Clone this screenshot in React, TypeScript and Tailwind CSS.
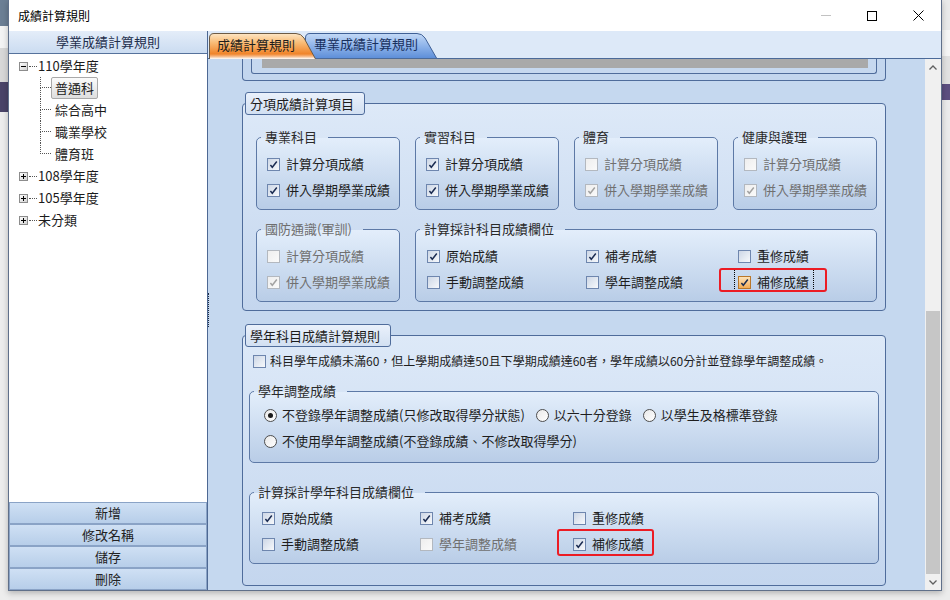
import React from "react";

type CbProps = { checked?: boolean; disabled?: boolean; hot?: boolean };

function Box({ checked, disabled, hot }: CbProps) {
  const cls = hot
    ? "border-[#b9772a] bg-linear-to-b from-[#fde3b8] to-[#f4ac52]"
    : disabled
    ? "border-[#b3b8bf] bg-linear-to-br from-[#eeeeee] to-[#fafafa]"
    : "border-[#6e86ae] bg-linear-to-br from-[#cdd7e6] to-[#f7f9fc]";
  return (
    <span className={`w-[13px] h-[13px] shrink-0 border ${cls} flex items-center justify-center`}>
      {checked && (
        <svg width="11" height="11" viewBox="0 0 11 11">
          <path
            d="M2.4 5.9 L4.3 8.2 L8.8 2.5"
            fill="none"
            stroke={disabled ? "#a2a2a2" : "#1b2c52"}
            strokeWidth="1.5"
          />
        </svg>
      )}
    </span>
  );
}

function Cb({
  label,
  checked,
  disabled,
  hot,
  children,
}: CbProps & { label: string; children?: React.ReactNode }) {
  return (
    <div className="relative flex items-center gap-[6px] h-[26px]">
      <Box checked={checked} disabled={disabled} hot={hot} />
      <span
        className={`text-[13px] leading-[18px] whitespace-nowrap ${
          disabled ? "text-[#707070]" : "text-[#1e1e1e]"
        }`}
      >
        {label}
      </span>
      {children}
    </div>
  );
}

function Radio({ label, checked }: { label: string; checked?: boolean }) {
  return (
    <div className="flex items-center gap-[5px] h-[26px]">
      <span className="w-[13px] h-[13px] rounded-full border border-[#4e4e4e] bg-linear-to-br from-[#e9e9e9] to-white flex items-center justify-center">
        {checked && <span className="w-[5px] h-[5px] rounded-full bg-[#1a1a1a]" />}
      </span>
      <span className="text-[13px] leading-[18px] whitespace-nowrap text-[#1e1e1e]">{label}</span>
    </div>
  );
}

function Sub({
  title,
  gray,
  className,
  children,
}: {
  title: string;
  gray?: boolean;
  className?: string;
  children: React.ReactNode;
}) {
  return (
    <fieldset
      className={`border border-[#5d79a6] rounded-[5px] bg-linear-to-b from-[#e3eefb] to-[#b9cde7] ${className ?? ""}`}
    >
      <legend
        className={`ml-[4px] pl-[4px] pr-[11px] text-[13px] leading-[18px] ${
          gray ? "text-[#6e6e6e]" : "text-[#2a2a2a]"
        }`}
      >
        {title}
      </legend>
      {children}
    </fieldset>
  );
}

function Group({
  title,
  children,
}: {
  title: string;
  children: React.ReactNode;
}) {
  return (
    <div className="flex flex-col w-[644px]">
      <div className="relative z-10 self-start ml-[3px] h-[23px] px-[4px] pr-[10px] rounded-[3px] border border-[#4f6c9b] bg-linear-to-b from-[#eaf1fb] to-[#d2e0f2] text-[13px] leading-[21px] text-[#1c1c1c] whitespace-nowrap">
        {title}
      </div>
      <div className="-mt-[12px] border border-[#4f6c9b] rounded-[4px] bg-linear-to-b from-[#dde9f8] to-[#c4d6ee]">
        {children}
      </div>
    </div>
  );
}

function Expander({ open }: { open?: boolean }) {
  return (
    <svg width="9" height="9" viewBox="0 0 9 9" className="shrink-0">
      <defs>
        <linearGradient id={open ? "exo" : "exc"} x1="0" y1="0" x2="1" y2="1">
          <stop offset="0" stopColor="#ffffff" />
          <stop offset="1" stopColor="#d0d0d0" />
        </linearGradient>
      </defs>
      <rect x="0.5" y="0.5" width="8" height="8" fill={`url(#${open ? "exo" : "exc"})`} stroke="#8c8c8c" />
      <line x1="2" y1="4.5" x2="7" y2="4.5" stroke="#000" />
      {!open && <line x1="4.5" y1="2" x2="4.5" y2="7" stroke="#000" />}
    </svg>
  );
}

function YearRow({ label, open }: { label: string; open?: boolean }) {
  return (
    <div className="flex items-center h-[22px] pl-[10px]">
      <Expander open={open} />
      <span className="w-[8px] border-t border-dotted border-[#555] ml-px mr-[1px]" />
      <span className="text-[13px] leading-[18px] text-[#1b1b1b]">{label}</span>
    </div>
  );
}

function ChildRow({ label, last, selected }: { label: string; last?: boolean; selected?: boolean }) {
  return (
    <div className="flex h-[22px]">
      <div className="w-[11px] flex flex-col">
        <div className="h-[11px] border-l border-b border-dotted border-[#555]" />
        <div className={`flex-1 ${last ? "" : "border-l border-dotted border-[#555]"}`} />
      </div>
      <div className="flex items-center">
        <span
          className={`px-[3px] h-[22px] flex items-center border rounded-[2px] text-[13px] leading-[18px] text-[#1b1b1b] ${
            selected ? "border-[#a9a9a9] bg-linear-to-b from-[#fbfbfb] to-[#dedede]" : "border-transparent"
          }`}
        >
          {label}
        </span>
      </div>
    </div>
  );
}

function SideButton({ label }: { label: string }) {
  return (
    <div className="h-[22px] flex items-center justify-center border border-[#8aa3c6] bg-linear-to-b from-[#cfe0f4] to-[#b7cee9] text-[13px] leading-[18px] text-[#222]">
      {label}
    </div>
  );
}

export default function App() {
  return (
    <div className="relative w-[950px] h-[600px] overflow-hidden bg-[#ececec] font-['Noto_Sans_CJK_TC','Noto_Sans',sans-serif] text-[#1e1e1e]">
      {/* desktop fragments */}
      <div className="absolute left-0 top-0 w-[8px] h-[600px] flex flex-col">
        <div className="h-[26px] bg-[#6c7f95]" />
        <div className="h-[22px] bg-[#f4f4f4]" />
        <div className="h-[34px] bg-[#d8d8d8]" />
        <div className="h-[30px] bg-[#4a4468]" />
        <div className="flex-1 bg-[#ededed]" />
      </div>
      <div className="absolute right-0 top-0 w-[8px] h-[600px] flex flex-col">
        <div className="h-[30px] bg-[#eaeaea]" />
        <div className="h-[26px] bg-[#f6f6f6]" />
        <div className="h-[28px] bg-[#e2e2e2]" />
        <div className="h-[16px] bg-[#5c4f80]" />
        <div className="flex-1 bg-[#ececec]" />
      </div>

      {/* window */}
      <div className="absolute left-[8px] top-0 w-[934px] h-[591px] flex flex-col bg-white border-x border-b border-[#60708a] shadow-[0_2px_6px_rgba(0,0,0,0.25)]">
        {/* title bar */}
        <div className="h-[31px] flex items-center shrink-0 bg-white">
          <span className="pl-[9px] text-[12px] leading-[16px] text-black">成績計算規則</span>
          <div className="ml-auto flex h-full">
            <div className="w-[46px] flex items-center justify-center">
              <span className="w-[10px] h-px bg-[#c2c2c2]" />
            </div>
            <div className="w-[46px] flex items-center justify-center">
              <span className="w-[10px] h-[10px] border border-black" />
            </div>
            <div className="w-[46px] flex items-center justify-center">
              <svg width="11" height="11" viewBox="0 0 11 11">
                <path d="M0.5 0.5 L10.5 10.5 M10.5 0.5 L0.5 10.5" stroke="#000" strokeWidth="1" />
              </svg>
            </div>
          </div>
        </div>

        {/* body */}
        <div className="flex flex-1 min-h-0">
          {/* left panel */}
          <div className="w-[198px] flex flex-col shrink-0 bg-white">
            <div className="h-[23px] shrink-0 flex items-center justify-center border-b border-[#56729c] bg-linear-to-b from-[#e4edf9] to-[#cbdcf1] text-[13px] leading-[18px] text-[#1f2f4d]">
              學業成績計算規則
            </div>
            <div className="flex-1 pt-px bg-white">
              <YearRow label="110學年度" open />
              <div className="pl-[31px]">
                <ChildRow label="普通科" selected />
                <ChildRow label="綜合高中" />
                <ChildRow label="職業學校" />
                <ChildRow label="體育班" last />
              </div>
              <YearRow label="108學年度" />
              <YearRow label="105學年度" />
              <YearRow label="未分類" />
            </div>
            <div className="shrink-0 flex flex-col">
              <SideButton label="新增" />
              <SideButton label="修改名稱" />
              <SideButton label="儲存" />
              <SideButton label="刪除" />
            </div>
          </div>

          {/* splitter */}
          <div className="w-px shrink-0 bg-[#4d6893]" />

          {/* right panel */}
          <div className="flex-1 min-w-0 flex flex-col">
            {/* tabs */}
            <div className="h-[28px] shrink-0 flex items-end pl-px border-b border-[#4b6a99] bg-[#dde9f8]">
              <div className="relative z-10 w-[107px] h-[26px] -mb-px">
                <svg width="107" height="26" viewBox="0 0 107 26" className="absolute inset-0">
                  <defs>
                    <linearGradient id="tabA" x1="0" y1="0" x2="0" y2="1">
                      <stop offset="0" stopColor="#fde6c6" />
                      <stop offset="0.35" stopColor="#f9bd78" />
                      <stop offset="0.8" stopColor="#f0842a" />
                      <stop offset="0.9" stopColor="#f6b987" />
                      <stop offset="1" stopColor="#ffffff" />
                    </linearGradient>
                  </defs>
                  <path
                    d="M0.5 26 L0.5 5 Q0.5 0.5 5 0.5 L87 0.5 Q92 0.5 95 5 L106.5 26"
                    fill="url(#tabA)"
                    stroke="#6d5b45"
                  />
                </svg>
                <span className="absolute left-[8px] top-[3px] text-[13px] leading-[18px] text-[#1c1c1c]">成績計算規則</span>
              </div>
              <div className="relative -ml-[11px] w-[132px] h-[25px]">
                <svg width="132" height="25" viewBox="0 0 132 25" className="absolute inset-0">
                  <defs>
                    <linearGradient id="tabB" x1="0" y1="0" x2="0" y2="1">
                      <stop offset="0" stopColor="#c3d9f6" />
                      <stop offset="0.5" stopColor="#8fb4ea" />
                      <stop offset="1" stopColor="#5e8fd9" />
                    </linearGradient>
                  </defs>
                  <path
                    d="M0.5 25 L0.5 5 Q0.5 0.5 5 0.5 L112 0.5 Q117 0.5 120 5 L131.5 25"
                    fill="url(#tabB)"
                    stroke="#3f6096"
                  />
                </svg>
                <span className="absolute left-[9px] top-[2px] text-[13px] leading-[18px] text-[#18305e]">畢業成績計算規則</span>
              </div>
            </div>

            {/* content + scrollbar */}
            <div className="flex flex-1 min-h-0">
              <div className="flex-1 min-w-0 overflow-hidden bg-[#c5d8ef] pl-[34px] flex flex-col relative">
                <div className="absolute left-0 top-[234px] h-[34px] border-l border-dotted border-[#1d2b44]" />
                {/* partial top box */}
                <div className="w-[644px] h-[22px] shrink-0 border-x border-b border-[#4f6c9b] rounded-b-[4px] bg-[#c3d6ee] px-[8px]">
                  <div className="h-[15px] border-x border-b border-[#4f6c9b] rounded-b-[3px] bg-[#c6d8ef] pl-[10px] pr-[8px]">
                    <div className="h-[9px] bg-[#a9a9a9]" />
                  </div>
                </div>

                <div className="mt-[11px] shrink-0">
                  <Group title="分項成績計算項目">
                    <div className="pt-[24px] pb-[8px] pl-[13px] flex flex-col gap-[10px]">
                      <div className="flex gap-[15px]">
                        {[
                          { t: "專業科目", d: false, a: true },
                          { t: "實習科目", d: false, a: true },
                          { t: "體育", d: true, a: false },
                          { t: "健康與護理", d: true, a: false },
                        ].map((g) => (
                          <Sub key={g.t} title={g.t} className="w-[144px]">
                            <div className="pt-[5px] pb-[6px] pl-[10px] flex flex-col">
                              <Cb label="計算分項成績" checked={g.a} disabled={g.d} />
                              <Cb label="併入學期學業成績" checked disabled={g.d} />
                            </div>
                          </Sub>
                        ))}
                      </div>
                      <div className="flex gap-[15px]">
                        <Sub title="國防通識(軍訓)" gray className="w-[144px]">
                          <div className="pt-[5px] pb-[6px] pl-[10px] flex flex-col">
                            <Cb label="計算分項成績" disabled />
                            <Cb label="併入學期學業成績" checked disabled />
                          </div>
                        </Sub>
                        <Sub title="計算採計科目成績欄位" className="w-[462px]">
                          <div className="pt-[5px] pb-[6px] pl-[11px] grid grid-cols-[159px_152px_1fr]">
                            <Cb label="原始成績" checked />
                            <Cb label="補考成績" checked />
                            <Cb label="重修成績" />
                            <Cb label="手動調整成績" />
                            <Cb label="學年調整成績" />
                            <Cb label="補修成績" checked hot>
                              <span className="absolute left-[-4px] top-px w-[80px] h-[21px] border-x border-dotted border-black" />
                              <span className="absolute left-[-19px] top-[-1px] w-[108px] h-[24px] border-2 border-[#ec1c24] rounded-[3px]" />
                            </Cb>
                          </div>
                        </Sub>
                      </div>
                    </div>
                  </Group>
                </div>

                <div className="mt-[13px] shrink-0">
                  <Group title="學年科目成績計算規則">
                    <div className="pt-[14px] pb-[21px] px-[6px] flex flex-col">
                      <div className="h-[22px] pl-[4px] flex items-center gap-[4px]">
                        <Box />
                        <span className="text-[12px] leading-[16px] whitespace-nowrap text-[#1e1e1e]">
                          科目學年成績未滿60，但上學期成績達50且下學期成績達60者，學年成績以60分計並登錄學年調整成績。
                        </span>
                      </div>
                      <Sub title="學年調整成績" className="mt-[10px]">
                        <div className="pt-[2px] pb-[8px] pl-[14px] flex flex-col">
                          <div className="flex gap-[11px]">
                            <Radio label="不登錄學年調整成績(只修改取得學分狀態)" checked />
                            <Radio label="以六十分登錄" />
                            <Radio label="以學生及格標準登錄" />
                          </div>
                          <Radio label="不使用學年調整成績(不登錄成績、不修改取得學分)" />
                        </div>
                      </Sub>
                      <Sub title="計算採計學年科目成績欄位" className="mt-[20px]">
                        <div className="pt-[4px] pb-[6px] pl-[12px] grid grid-cols-[158px_153px_1fr]">
                          <Cb label="原始成績" checked />
                          <Cb label="補考成績" checked />
                          <Cb label="重修成績" />
                          <Cb label="手動調整成績" />
                          <Cb label="學年調整成績" disabled />
                          <Cb label="補修成績" checked>
                            <span className="absolute left-[-16px] top-[-2px] w-[97px] h-[27px] border-2 border-[#ec1c24] rounded-[3px]" />
                          </Cb>
                        </div>
                      </Sub>
                    </div>
                  </Group>
                </div>
              </div>

              {/* scrollbar */}
              <div className="w-[16px] shrink-0 bg-[#f0f0f0] flex flex-col">
                <div className="h-[17px] flex items-center justify-center">
                  <svg width="8" height="5" viewBox="0 0 8 5">
                    <path d="M0.5 4.5 L4 1 L7.5 4.5" fill="none" stroke="#606060" strokeWidth="1.3" />
                  </svg>
                </div>
                <div className="h-[235px]" />
                <div className="flex-1 mx-px bg-[#c6c6c6]" />
                <div className="h-[16px] flex items-center justify-center">
                  <svg width="8" height="5" viewBox="0 0 8 5">
                    <path d="M0.5 0.5 L4 4 L7.5 0.5" fill="none" stroke="#606060" strokeWidth="1.3" />
                  </svg>
                </div>
              </div>
            </div>
          </div>
        </div>
      </div>
    </div>
  );
}
